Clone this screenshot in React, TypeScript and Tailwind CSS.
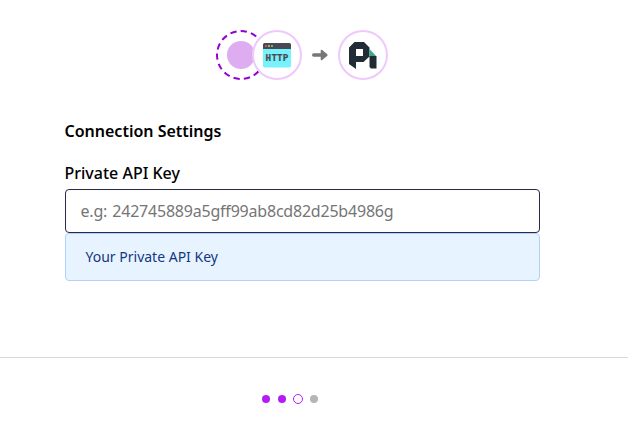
import React from "react";

function PlaceholderCircle() {
  return (
    <svg width="50" height="50" viewBox="0 0 50 50" className="shrink-0" aria-hidden="true">
      <circle cx="25" cy="25" r="24" fill="#fff" stroke="#9400d3" strokeWidth="2" strokeDasharray="6.28 4.19" strokeDashoffset="3.14" />
      <circle cx="25" cy="25" r="14" fill="#deacf0" />
    </svg>
  );
}

function HttpIcon() {
  return (
    <svg width="28" height="25" viewBox="0 0 28 25" aria-hidden="true">
      <path d="M0 5h28v17.5a2 2 0 0 1-2 2H2a2 2 0 0 1-2-2z" fill="#78f2fa" />
      <path d="M1.5 0h25A1.5 1.5 0 0 1 28 1.5V6H0V1.5A1.5 1.5 0 0 1 1.5 0z" fill="#484955" />
      <circle cx="3" cy="3" r="0.9" fill="#f35a70" />
      <circle cx="6" cy="3" r="0.9" fill="#f5cf4e" />
      <circle cx="9" cy="3" r="0.9" fill="#8edb69" />
      <text x="2.6 8.4 14 19.8" y="18.2" fill="#484955" stroke="#484955" strokeWidth="0.2" className="font-['DejaVu_Sans_Mono',monospace] text-[9.3px] font-bold">HTTP</text>
    </svg>
  );
}

function BrandIcon() {
  return (
    <svg width="28" height="27" viewBox="0 0 28 27" aria-hidden="true">
      <path fillRule="evenodd" d="M5.5 0H15L20.5 5.5V14.5L14.5 20H7V27L0 22V5.5zM7 7v7h7V7z" fill="#202c36" />
      <path d="M20.5 7L27.5 14.5h-7z" fill="#3aaa91" />
      <path d="M20.5 14H27.5V26.5H22L20.5 25z" fill="#202c36" />
    </svg>
  );
}

function Arrow() {
  return (
    <svg width="16" height="12" viewBox="0 0 16 12" aria-hidden="true">
      <path d="M1.7 4.3H8.7V1.7Q8.8.1 10.2 1L15.3 5.3Q16 6 15.3 6.7L10.2 11Q8.8 11.9 8.7 10.3V7.7H1.7Q0 7.6 0 6T1.7 4.3z" fill="#777" />
    </svg>
  );
}

function IconCircle({ children }: { children: React.ReactNode }) {
  return (
    <div className="flex size-[50px] shrink-0 items-center justify-center rounded-full border-2 border-[#efc8fc] bg-white">
      {children}
    </div>
  );
}

export default function App() {
  return (
    <div className="flex h-[435px] w-full flex-col bg-white font-['Noto_Sans',sans-serif] text-black">
      <header className="flex justify-center pt-[30px] pr-6">
        <PlaceholderCircle />
        <div className="z-10 -ml-3.5">
          <IconCircle><HttpIcon /></IconCircle>
        </div>
        <div className="flex w-9 items-center justify-center"><Arrow /></div>
        <IconCircle><BrandIcon /></IconCircle>
      </header>
      <main className="flex h-[278px] flex-col border-b border-[#d9d9d9] pt-[39px] pr-[88px] pl-[65px]">
        <h1 className="-ml-[0.5px] h-[42px] text-base font-semibold">Connection Settings</h1>
        <label htmlFor="key" className="-ml-[0.5px] h-7 text-base font-medium">Private API Key</label>
        <input
          id="key"
          placeholder="e.g: 242745889a5gff99ab8cd82d25b4986g"
          className="h-11 w-full shrink-0 rounded border border-[#282a49] px-[14.5px] text-base tracking-[-0.21px] [word-spacing:1.2px] placeholder:text-[#757575]"
        />
        <div className="flex h-12 w-full shrink-0 items-center rounded border border-[#b0d2fa] bg-[#e7f4ff] px-[19.5px] text-sm text-[#143780]">
          Your Private API Key
        </div>
      </main>
      <footer className="flex justify-center pt-9 pr-12">
        <div className="flex items-center gap-[7px]">
          <span className="mr-px size-2 rounded-full bg-[#b51cf5]" />
          <span className="size-2 rounded-full bg-[#b51cf5]" />
          <span className="size-2.5 rounded-full border border-[#b51cf5]" />
          <span className="size-2 rounded-full bg-[#b5b5b5]" />
        </div>
      </footer>
    </div>
  );
}
